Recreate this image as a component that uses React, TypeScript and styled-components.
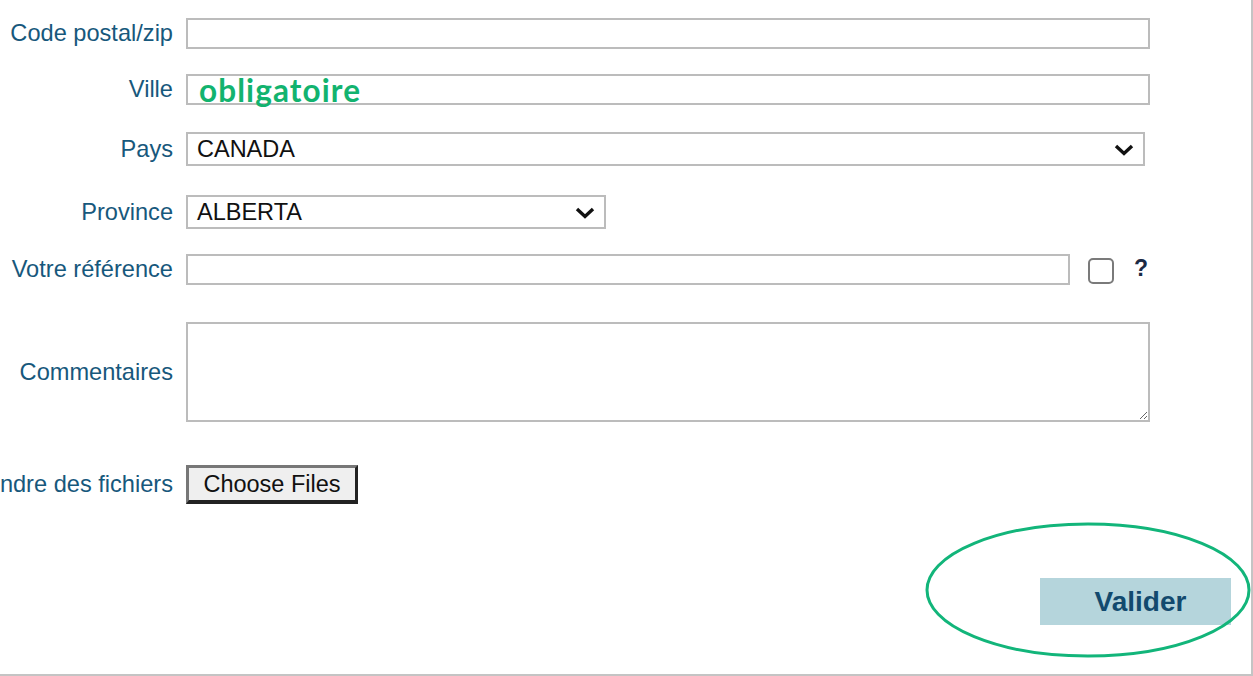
import * as React from 'react';
import styled, {createGlobalStyle} from 'styled-components';

const GlobalStyle = createGlobalStyle`
	html, body {
		margin: 0;
		padding: 0;
		background: #fff;
		overflow: hidden;
	}
	body {
		font-family: "Liberation Sans", Arial, sans-serif;
	}
`;

const Panel = styled.div`
	position: relative;
	box-sizing: border-box;
	width: 1253px;
	height: 676px;
	border-right: 2px solid #c4c4c4;
	border-bottom: 2px solid #c4c4c4;
	padding-top: 18px;
`;

const Form = styled.form`
	display: flex;
	flex-direction: column;
`;

const Row = styled.div<{$top?: number}>`
	display: flex;
	align-items: center;
	gap: 13px;
	margin-top: ${p => p.$top || 0}px;
`;

const Label = styled.label`
	flex: 0 0 173px;
	min-width: 0;
	display: flex;
	justify-content: flex-end;
	white-space: nowrap;
	font-size: 23.6px;
	color: #17587c;
`;

const TextInput = styled.input<{$width: number}>`
	box-sizing: border-box;
	width: ${p => p.$width}px;
	height: 31px;
	border: 2px solid #bcbcbc;
	padding: 0 10px;
	font: 23px "Liberation Sans", Arial, sans-serif;
	outline: none;
`;

const Field = styled.div`
	position: relative;
	display: flex;
`;

const Required = styled.span`
	position: absolute;
	left: 13px;
	top: -3px;
	font-family: Lato, sans-serif;
	font-weight: 700;
	font-size: 31.5px;
	letter-spacing: 1.1px;
	color: #12b36f;
	pointer-events: none;
`;

const SelectBox = styled.div<{$width: number}>`
	position: relative;
	box-sizing: border-box;
	width: ${p => p.$width}px;
	height: 34px;
	border: 2px solid #bcbcbc;
	display: flex;
	align-items: center;
	padding-left: 9px;
	font-size: 23.5px;
	color: #111;
`;

const Chevron = styled.svg`
	position: absolute;
	right: 8px;
	top: 9px;
`;

const Check = styled.span`
	box-sizing: border-box;
	width: 26px;
	height: 26px;
	margin-left: 5px;
	margin-top: 2px;
	border: 2px solid #7a7a7a;
	border-radius: 5px;
`;

const Help = styled.span`
	margin-left: 7px;
	margin-top: -3px;
	font-size: 23px;
	font-weight: 700;
	color: #1b2a45;
`;

const TextArea = styled.textarea`
	box-sizing: border-box;
	width: 964px;
	height: 100px;
	border: 2px solid #bcbcbc;
	font: 20px "Liberation Sans", Arial, sans-serif;
	outline: none;
`;

const FileButton = styled.button`
	box-sizing: border-box;
	width: 172px;
	height: 39px;
	background: #efefef;
	border-style: solid;
	border-width: 3px 3px 4px 3px;
	border-color: #777 #222 #222 #777;
	font: 23.5px "Liberation Sans", Arial, sans-serif;
	color: #111;
	padding: 0;
`;

const Actions = styled.div`
	display: flex;
	justify-content: flex-end;
	padding-right: 20px;
	margin-top: 74px;
`;

const Submit = styled.button`
	width: 191px;
	height: 47px;
	border: none;
	background: #b5d5dc;
	color: #124a6e;
	font: 700 28px "Liberation Sans", Arial, sans-serif;
	padding: 0 0 0 10px;
`;

const Circle = styled.svg`
	position: absolute;
	left: 924px;
	top: 521px;
	pointer-events: none;
`;

const Arrow = () => (
	<Chevron width="22" height="14" viewBox="0 0 22 14">
		<path d="M3 3 L11 10.5 L19 3" fill="none" stroke="#111" strokeWidth="3.4"/>
	</Chevron>
);

export default function App() {
	return (
		<>
			<GlobalStyle/>
			<Panel>
				<Form>
					<Row>
						<Label>Code postal/zip</Label>
						<TextInput $width={964}/>
					</Row>
					<Row $top={25}>
						<Label>Ville</Label>
						<Field>
							<TextInput $width={964}/>
							<Required>obligatoire</Required>
						</Field>
					</Row>
					<Row $top={27}>
						<Label>Pays</Label>
						<SelectBox $width={959}>CANADA<Arrow/></SelectBox>
					</Row>
					<Row $top={29}>
						<Label>Province</Label>
						<SelectBox $width={420}>ALBERTA<Arrow/></SelectBox>
					</Row>
					<Row $top={25}>
						<Label>Votre référence</Label>
						<TextInput $width={884}/>
						<Check/>
						<Help>?</Help>
					</Row>
					<Row $top={37}>
						<Label>Commentaires</Label>
						<TextArea/>
					</Row>
					<Row $top={43}>
						<Label>Joindre des fichiers</Label>
						<FileButton type="button">Choose Files</FileButton>
					</Row>
					<Actions>
						<Submit type="button">Valider</Submit>
					</Actions>
				</Form>
				<Circle width="330" height="140" viewBox="0 0 330 140">
					<ellipse cx="164" cy="69" rx="161" ry="66" fill="none" stroke="#12b57a" strokeWidth="3"/>
				</Circle>
			</Panel>
		</>
	);
}
